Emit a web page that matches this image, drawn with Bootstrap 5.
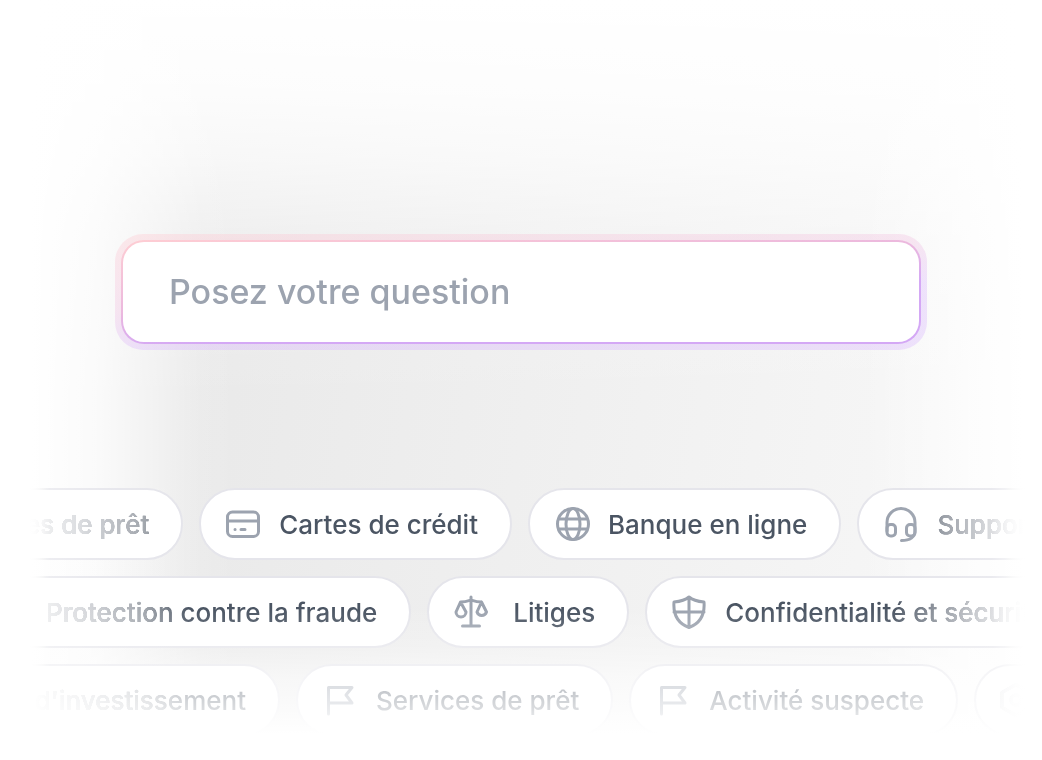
<!DOCTYPE html>
<html lang="fr">
<head>
<meta charset="utf-8">
<meta name="viewport" content="width=device-width, initial-scale=1">
<title>Posez votre question</title>
<link href="https://cdn.jsdelivr.net/npm/bootstrap@5.3.0/dist/css/bootstrap.min.css" rel="stylesheet">
<style>
  body { font-family: Inter, "Liberation Sans", sans-serif; background: #fff; }
  .stage {
    padding-top: 234px;
    background:
      linear-gradient(90deg, #fff 32px, rgba(255,255,255,.8) 96px, rgba(255,255,255,.45) 150px, rgba(255,255,255,.1) 200px, rgba(255,255,255,0) 236px, rgba(255,255,255,0) calc(100% - 180px), rgba(255,255,255,.65) calc(100% - 80px), #fff calc(100% - 20px)),
      linear-gradient(180deg, #fff 0, rgba(255,255,255,.88) 90px, rgba(255,255,255,.65) 160px, rgba(255,255,255,.25) 240px, rgba(255,255,255,0) 400px),
      linear-gradient(98deg, #e9e9e9 20%, #f7f7f7 92%);
  }
  .ask-ring {
    max-width: 812px;
    padding: 6px;
    border-radius: 28px;
    background: linear-gradient(175deg, rgba(254,205,211,.4), rgba(240,190,225,.35) 42%, rgba(216,180,254,.35) 64%);
  }
  .ask-edge {
    padding: 2px;
    border-radius: 23px;
    background: linear-gradient(175deg, #fecdd3, #ebb8de 42%, #d4a8f5 64%);
  }
  .ask-input, .ask-input:focus {
    height: 100px;
    padding: 0 46px 2px;
    border-radius: 21px;
    font-size: 34px;
    font-weight: 500;
    background: #fff;
    box-shadow: none;
    color: #4b5563;
  }
  .ask-input::placeholder { color: #9ca3af; opacity: 1; }
  .topics {
    margin-top: 138px;
    overflow: hidden;
  }
  .topics::before, .topics::after {
    content: "";
    position: absolute;
    inset: 0;
    z-index: 1;
    pointer-events: none;
  }
  .topics::before {
    mix-blend-mode: lighten;
    background: linear-gradient(90deg, #fff 28px, #e6e7e9 46px, #d2d4d8 80px, #9ca1a8 145px, #4b5563 188px, #4b5563 calc(100% - 150px), #989da5 calc(100% - 92px), #dcdde0 calc(100% - 44px), #fff calc(100% - 14px));
  }
  .topics::after {
    background:
      linear-gradient(90deg, #fff 28px, rgba(255,255,255,.3) 50px, rgba(255,255,255,.1) 110px, rgba(255,255,255,0) 195px, rgba(255,255,255,0) calc(100% - 150px), rgba(255,255,255,.2) calc(100% - 50px), #fff calc(100% - 16px)),
      linear-gradient(180deg, rgba(255,255,255,0) 120px, rgba(255,255,255,.25) 158px, rgba(255,255,255,.6) 190px, rgba(255,255,255,.8) 222px, #fff 246px);
  }
  .track { width: max-content; }
  .track-loans { margin-left: -134px; }
  .track-fraud { margin-left: -34px; }
  .track-invest { margin-left: -164px; }
  .topic {
    min-width: 202px;
    height: 72px;
    padding: 0 32px 0 24px;
    border: 2px solid #e5e5eb;
    border-radius: 36px;
    background: #fff;
    color: #4b5563;
    font-size: 26px;
    font-weight: 500;
    line-height: 32px;
    white-space: nowrap;
  }
  .topic span { padding: 2px 0 0 18px; }
  .topic svg {
    width: 36px;
    height: 36px;
    flex: none;
    fill: none;
    stroke: #9ca3af;
    stroke-width: 3;
    stroke-linecap: round;
    stroke-linejoin: round;
  }
</style>
</head>
<body>
<svg class="d-none" aria-hidden="true">
  <symbol id="i-flag" viewBox="0 0 36 36"><path d="M6.500 32V5.500H30l-6 7.500 6 8H6.500"/></symbol>
  <symbol id="i-card" viewBox="0 0 36 36"><rect x="2.500" y="6" width="31" height="24.500" rx="5"/><path d="M3 15h30M10 23.500h.1M16 23.500h4"/></symbol>
  <symbol id="i-globe" viewBox="0 0 36 36"><circle cx="19" cy="18" r="15.500"/><ellipse cx="19" cy="18" rx="7" ry="15.500"/><path d="M5 13h28M5 23h28"/></symbol>
  <symbol id="i-headset" viewBox="0 0 36 36"><rect x="4" y="18.500" width="8.500" height="11.500" rx="3.500"/><rect x="23.500" y="18.500" width="8.500" height="11.500" rx="3.500"/><path d="M4 25v-8.500a14 14 0 0 1 28 0V25c0 6-5 9.500-13.500 9.500"/></symbol>
  <symbol id="i-scales" viewBox="0 0 36 36"><path d="M18 3v29M9.500 32h17M7.500 8C13 8 15 7 18 6c3 1 5 2 10.500 2M7.500 8 3 18a5 5 0 0 0 10 0zM28.500 8 24 18a5 5 0 0 0 9.500 0z"/></symbol>
  <symbol id="i-shield" viewBox="0 0 36 36"><path d="M18 3c4 3.500 9 4.500 15 5C34 21 29 29.500 18 33.500 7 29.500 2 21 3 8c6-.5 11-1.500 15-5zM18 4v29M3 18h30"/></symbol>
  <symbol id="i-hex" viewBox="0 0 36 36"><path d="m16 2.500 14 8v15l-14 8-14-8v-15z"/><circle cx="16" cy="18" r="5"/></symbol>
</svg>

<main class="stage">
  <form class="ask-ring mx-auto" role="search">
    <div class="ask-edge">
      <input class="ask-input form-control border-0" type="text" aria-label="Posez votre question" placeholder="Posez votre question">
    </div>
  </form>

  <div class="topics position-relative d-flex flex-column gap-3">
    <div class="track track-loans d-flex gap-3">
      <button type="button" class="topic d-flex align-items-center"><svg><use href="#i-flag"/></svg><span class="flex-fill text-end">Services de prêt</span></button>
      <button type="button" class="topic d-flex align-items-center"><svg><use href="#i-card"/></svg><span class="flex-fill text-end">Cartes de crédit</span></button>
      <button type="button" class="topic d-flex align-items-center"><svg><use href="#i-globe"/></svg><span class="flex-fill text-end">Banque en ligne</span></button>
      <button type="button" class="topic d-flex align-items-center"><svg><use href="#i-headset"/></svg><span class="flex-fill text-end">Support</span></button>
    </div>
    <div class="track track-fraud d-flex gap-3">
      <button type="button" class="topic d-flex align-items-center"><svg><use href="#i-shield"/></svg><span class="flex-fill text-end">Protection contre la fraude</span></button>
      <button type="button" class="topic d-flex align-items-center"><svg><use href="#i-scales"/></svg><span class="flex-fill text-end">Litiges</span></button>
      <button type="button" class="topic d-flex align-items-center"><svg><use href="#i-shield"/></svg><span class="flex-fill text-end">Confidentialité et sécurité</span></button>
    </div>
    <div class="track track-invest d-flex gap-3">
      <button type="button" class="topic d-flex align-items-center"><svg><use href="#i-flag"/></svg><span class="flex-fill text-end">Comptes d'investissement</span></button>
      <button type="button" class="topic d-flex align-items-center"><svg><use href="#i-flag"/></svg><span class="flex-fill text-end">Services de prêt</span></button>
      <button type="button" class="topic d-flex align-items-center"><svg><use href="#i-flag"/></svg><span class="flex-fill text-end">Activité suspecte</span></button>
      <button type="button" class="topic d-flex align-items-center" aria-label="Paramètres"><svg><use href="#i-hex"/></svg></button>
    </div>
  </div>
</main>
<script src="https://cdn.jsdelivr.net/npm/bootstrap@5.3.0/dist/js/bootstrap.bundle.min.js"></script>
</body>
</html>
